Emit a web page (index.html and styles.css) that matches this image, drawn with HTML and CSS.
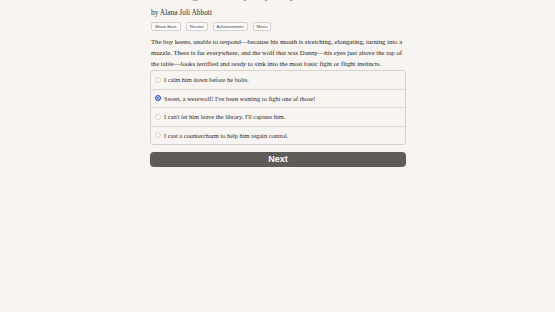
FILE: index.html
```html
<!DOCTYPE html>
<html>
<head>
<meta charset="utf-8">
<link rel="stylesheet" href="styles.css">
</head>
<body>
<div class="page">
  <h1 class="title">The Magic Library Mystery</h1>
  <div class="byline">by Alana Joli Abbott</div>
  <div class="buttons">
    <span class="btn">Show Stats</span>
    <span class="btn">Restart</span>
    <span class="btn">Achievements</span>
    <span class="btn">Menu</span>
  </div>
  <p class="text">The boy keens, unable to respond—because his mouth is stretching, elongating, turning into a muzzle. There is fur everywhere, and the wolf that was Danny—his eyes just above the top of the table—looks terrified and ready to sink into the most basic fight or flight instincts.</p>
  <div class="choices">
    <label class="choice"><span class="radio"></span>I calm him down before he bolts.</label>
    <label class="choice"><span class="radio on"></span>Sweet, a werewolf! I've been wanting to fight one of those!</label>
    <label class="choice"><span class="radio"></span>I can't let him leave the library. I'll capture him.</label>
    <label class="choice"><span class="radio"></span>I cast a countercharm to help him regain control.</label>
  </div>
  <div class="next">Next</div>
</div>
</body>
</html>
```
FILE: styles.css
```css
html, body {
  margin: 0;
  padding: 0;
  background: #f7f4f1;
}
body {
  font-family: "Liberation Serif", "DejaVu Serif", serif;
  color: #2b2927;
}
.page {
  width: 256px;
  margin: 0 auto;
  padding-left: 1px;
}
.title {
  font-size: 13px;
  font-weight: normal;
  margin: -13px 0 0 1px;
  height: 14px;
  line-height: 14px;
  color: #8a8784;
}
.byline {
  font-size: 7.4px;
  line-height: 9px;
  margin: 7px 0 0 1px;
  color: #2f2d2b;
}
.buttons {
  display: flex;
  gap: 5px;
  margin: 5px 0 0 1px;
}
.btn {
  font-family: "Liberation Sans", sans-serif;
  font-size: 4.3px;
  line-height: 7px;
  padding: 0 3px;
  border: 1px solid #d3d0cc;
  border-radius: 2px;
  background: #fbfaf8;
  color: #444;
}
.text {
  font-size: 6.7px;
  line-height: 11px;
  margin: 5px 0 0 1px;
  color: #262422;
}
.choices {
  margin-top: 1px;
  border: 1px solid #d6d2ce;
  border-radius: 3px;
  display: flex;
  flex-direction: column;
}
.choice {
  display: flex;
  align-items: center;
  height: 17.5px;
  padding-left: 4px;
  font-size: 6.4px;
  color: #2b2927;
  border-top: 1px solid #dcd8d4;
}
.choice:first-child {
  border-top: none;
}
.radio {
  width: 4px;
  height: 4px;
  border: 0.7px solid #d8d4d0;
  border-radius: 50%;
  background: #fdfcfb;
  margin-right: 3px;
  box-sizing: content-box;
}
.radio.on {
  background: #3d6fc9;
  border-color: #2b58ad;
  box-shadow: inset 0 0 0 1px #cfe0ff;
}
.next {
  margin-top: 7px;
  height: 15px;
  border-radius: 4px;
  background: #5f5b59;
  color: #fff;
  font-family: "Liberation Sans", sans-serif;
  font-weight: bold;
  font-size: 9px;
  line-height: 15px;
  text-align: center;
}
```
